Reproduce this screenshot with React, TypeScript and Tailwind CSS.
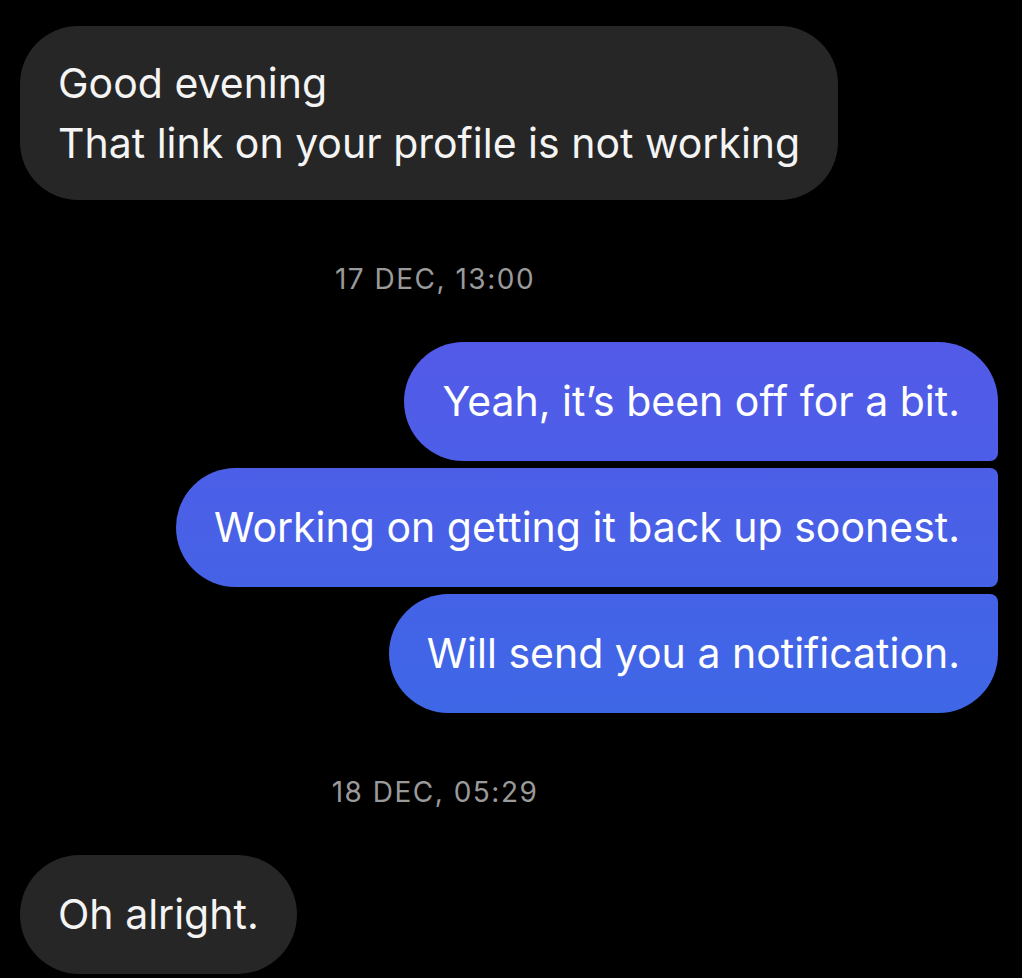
const sent = [
  { text: "Yeah, it’s been off for a bit.", corners: "rounded-l-[60px] rounded-tr-[60px] rounded-br-[8px]" },
  { text: "Working on getting it back up soonest.", corners: "rounded-l-[60px] rounded-r-[8px]" },
  { text: "Will send you a notification.", corners: "rounded-l-[60px] rounded-tr-[8px] rounded-br-[60px]" },
];

const Stamp = ({ label }: { label: string }) => (
  <div className="h-[142px] flex items-center justify-center pt-[15px] pr-[148px]">
    <span className="text-[28px] leading-none text-[#9a9a9a] tracking-[1.5px]">{label}</span>
  </div>
);

export default function App() {
  return (
    <div className="min-h-screen bg-black pt-[26px] pl-[20px] pr-[24px] font-['Inter','Noto_Sans',sans-serif] text-[#f4f4f4]">
      <div className="flex">
        <div className="bg-[#262626] rounded-[58px] px-[38px] py-[27px] text-[41px] leading-[60px]">
          <p>Good evening</p>
          <p>That link on your profile is not working</p>
        </div>
      </div>

      <Stamp label="17 DEC, 13:00" />

      <div className="flex flex-col items-end gap-[7px]">
        {sent.map((m) => (
          <div
            key={m.text}
            className={`h-[119px] flex items-center px-[38px] text-[41px] text-white bg-[linear-gradient(180deg,#535ae8_341px,#3e67e6_712px)] bg-fixed ${m.corners}`}
          >
            {m.text}
          </div>
        ))}
      </div>

      <Stamp label="18 DEC, 05:29" />

      <div className="flex">
        <div className="h-[119px] flex items-center bg-[#262626] rounded-[60px] px-[38px] text-[41px]">
          Oh alright.
        </div>
      </div>
    </div>
  );
}
